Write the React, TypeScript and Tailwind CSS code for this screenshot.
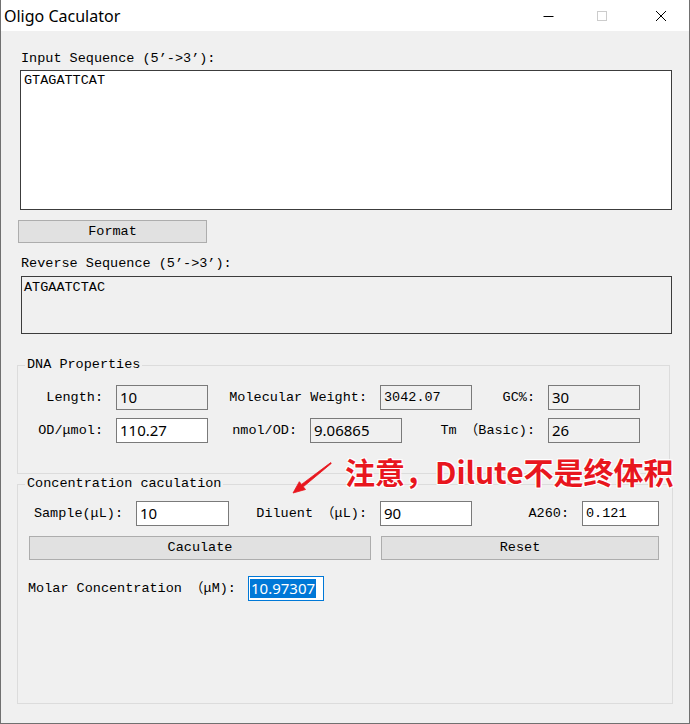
import React from "react";

const mono = "font-['Liberation_Mono','Noto_Sans_CJK_SC',monospace] text-[13.5px] leading-[16px] text-black";
const sans = "font-['Noto_Sans','Noto_Sans_CJK_SC',sans-serif] text-[15px] leading-none text-black";

type FieldProps = {
  label: string;
  labelW: string;
  boxW: string;
  value: string;
  readOnly?: boolean;
  monoValue?: boolean;
};

const Field: React.FC<FieldProps> = ({ label, labelW, boxW, value, readOnly, monoValue }) => (
  <>
    <div className={`${labelW} ${mono} shrink-0 whitespace-nowrap text-right`}>{label}</div>
    <div
      className={`${boxW} ml-[13px] flex h-full shrink-0 items-center border border-[#7a7a7a] pl-[3px] ${
        readOnly ? "bg-[#f0f0f0]" : "bg-white"
      }`}
    >
      <span className={monoValue ? mono : sans}>{value}</span>
    </div>
  </>
);

const Btn: React.FC<{ text: string; cls: string }> = ({ text, cls }) => (
  <div
    className={`${cls} flex shrink-0 items-center justify-center border border-[#adadad] bg-[#e1e1e1] ${mono}`}
  >
    {text}
  </div>
);

const GroupLabel: React.FC<{ text: string }> = ({ text }) => (
  // legend sitting on the group border
  <span className={`absolute -top-[9px] left-[7px] bg-[#f0f0f0] px-[2px] ${mono}`}>{text}</span>
);

export default function App() {
  return (
    <div className="relative flex h-[724px] w-[690px] flex-col overflow-hidden border-x border-b border-[#707070] bg-[#f0f0f0]">
      {/* Title bar */}
      <div className="flex h-[31px] shrink-0 items-center bg-white">
        <span className="ml-[3px] pt-[1px] font-['Noto_Sans',sans-serif] text-[16px] leading-none text-black">
          Oligo Caculator
        </span>
        <div className="ml-auto flex items-center">
          <svg width="12" height="12" viewBox="0 0 12 12" className="mr-[42px]">
            <path d="M0.5 6.5h10" stroke="#000" strokeWidth="1" />
          </svg>
          <svg width="10" height="10" viewBox="0 0 10 10" className="mr-[48px]">
            <rect x="0.5" y="0.5" width="9" height="9" fill="none" stroke="#cccccc" />
          </svg>
          <svg width="12" height="12" viewBox="0 0 12 12" className="mr-[22px]">
            <path d="M1 1l10 10M11 1L1 11" stroke="#000" strokeWidth="1" />
          </svg>
        </div>
      </div>

      {/* Body */}
      <div className="flex flex-1 flex-col">
        <div className={`ml-[20px] mt-[20px] ${mono}`}>Input Sequence (5’-&gt;3’):</div>
        <div className={`ml-[19px] mt-[3px] h-[140px] w-[652px] border border-[#3c3c3c] bg-white pl-[3px] pt-[2px] ${mono}`}>
          GTAGATTCAT
        </div>

        <Btn text="Format" cls="ml-[17px] mt-[10px] h-[23px] w-[189px]" />

        <div className={`ml-[20px] mt-[13px] ${mono}`}>Reverse Sequence (5’-&gt;3’):</div>
        <div className={`ml-[20px] mt-[4px] h-[58px] w-[651px] border border-[#3c3c3c] bg-[#f0f0f0] pl-[2px] pt-[3px] ${mono}`}>
          ATGAATCTAC
        </div>

        {/* DNA Properties */}
        <div className="relative ml-[16px] mt-[31px] h-[109px] w-[653px] shrink-0 border border-[#dcdcdc] pt-[19px]">
          <GroupLabel text="DNA Properties" />
          <div className="flex h-[25px] items-center">
            <Field label="Length:" labelW="w-[85px]" boxW="w-[92px]" value="10" readOnly />
            <Field label="Molecular Weight:" labelW="w-[159px]" boxW="w-[92px]" value="3042.07" readOnly monoValue />
            <Field label="GC%:" labelW="w-[63px]" boxW="w-[92px]" value="30" readOnly />
          </div>
          <div className="mt-[8px] flex h-[25px] items-center">
            <Field label="OD/μmol:" labelW="w-[85px]" boxW="w-[92px]" value="110.27" />
            <Field label="nmol/OD:" labelW="w-[89px]" boxW="w-[92px]" value="9.06865" readOnly />
            <Field label="Tm （Basic):" labelW="w-[133px]" boxW="w-[92px]" value="26" readOnly />
          </div>
        </div>

        {/* Concentration */}
        <div className="relative ml-[16px] mt-[10px] h-[220px] w-[656px] shrink-0 border border-[#dcdcdc] pt-[16px]">
          <GroupLabel text="Concentration caculation" />
          <div className="flex h-[25px] items-center">
            <Field label="Sample(μL):" labelW="w-[105px]" boxW="w-[93px]" value="10" />
            <Field label="Diluent （μL):" labelW="w-[138px]" boxW="w-[92px]" value="90" />
            <Field label="A260:" labelW="w-[97px]" boxW="w-[77px]" value="0.121" monoValue />
          </div>
          <div className="mt-[10px] flex h-[24px]">
            <Btn text="Caculate" cls="ml-[11px] h-full w-[342px]" />
            <Btn text="Reset" cls="ml-[10px] h-full w-[278px]" />
          </div>
          <div className="mt-[16px] flex h-[25px] items-center">
            <div className={`ml-[10px] w-[220px] shrink-0 whitespace-nowrap ${mono}`}>Molar Concentration （μM):</div>
            <div className="flex h-full w-[76px] items-center border border-[#0078d7] bg-white pl-[1px]">
              <span className={`${sans} bg-[#0078d7] px-[1px] py-[2px] text-white`}>10.97307</span>
            </div>
          </div>
        </div>
      </div>

      {/* Red annotation overlay */}
      <svg className="absolute left-[284px] top-[455px]" width="52" height="45" viewBox="0 0 52 45">
        <polygon
          points="46.3,8.4 18.3,31.8 20.5,34.5 8,38 14.3,26.7 16.5,29.4 45.7,7.6"
          fill="#e8161e"
          stroke="#e8161e"
          strokeWidth="0.8"
        />
      </svg>
      <div className="absolute left-[344px] top-[456px] whitespace-nowrap font-['Noto_Sans_CJK_SC',sans-serif] text-[30px] font-bold leading-none text-[#e8161e] [text-shadow:0_0_2px_#fff,1px_1px_0_#fff,-1px_-1px_0_#fff,1px_-1px_0_#fff,-1px_1px_0_#fff]">
        注意，Dilute不是终体积
      </div>
    </div>
  );
}
